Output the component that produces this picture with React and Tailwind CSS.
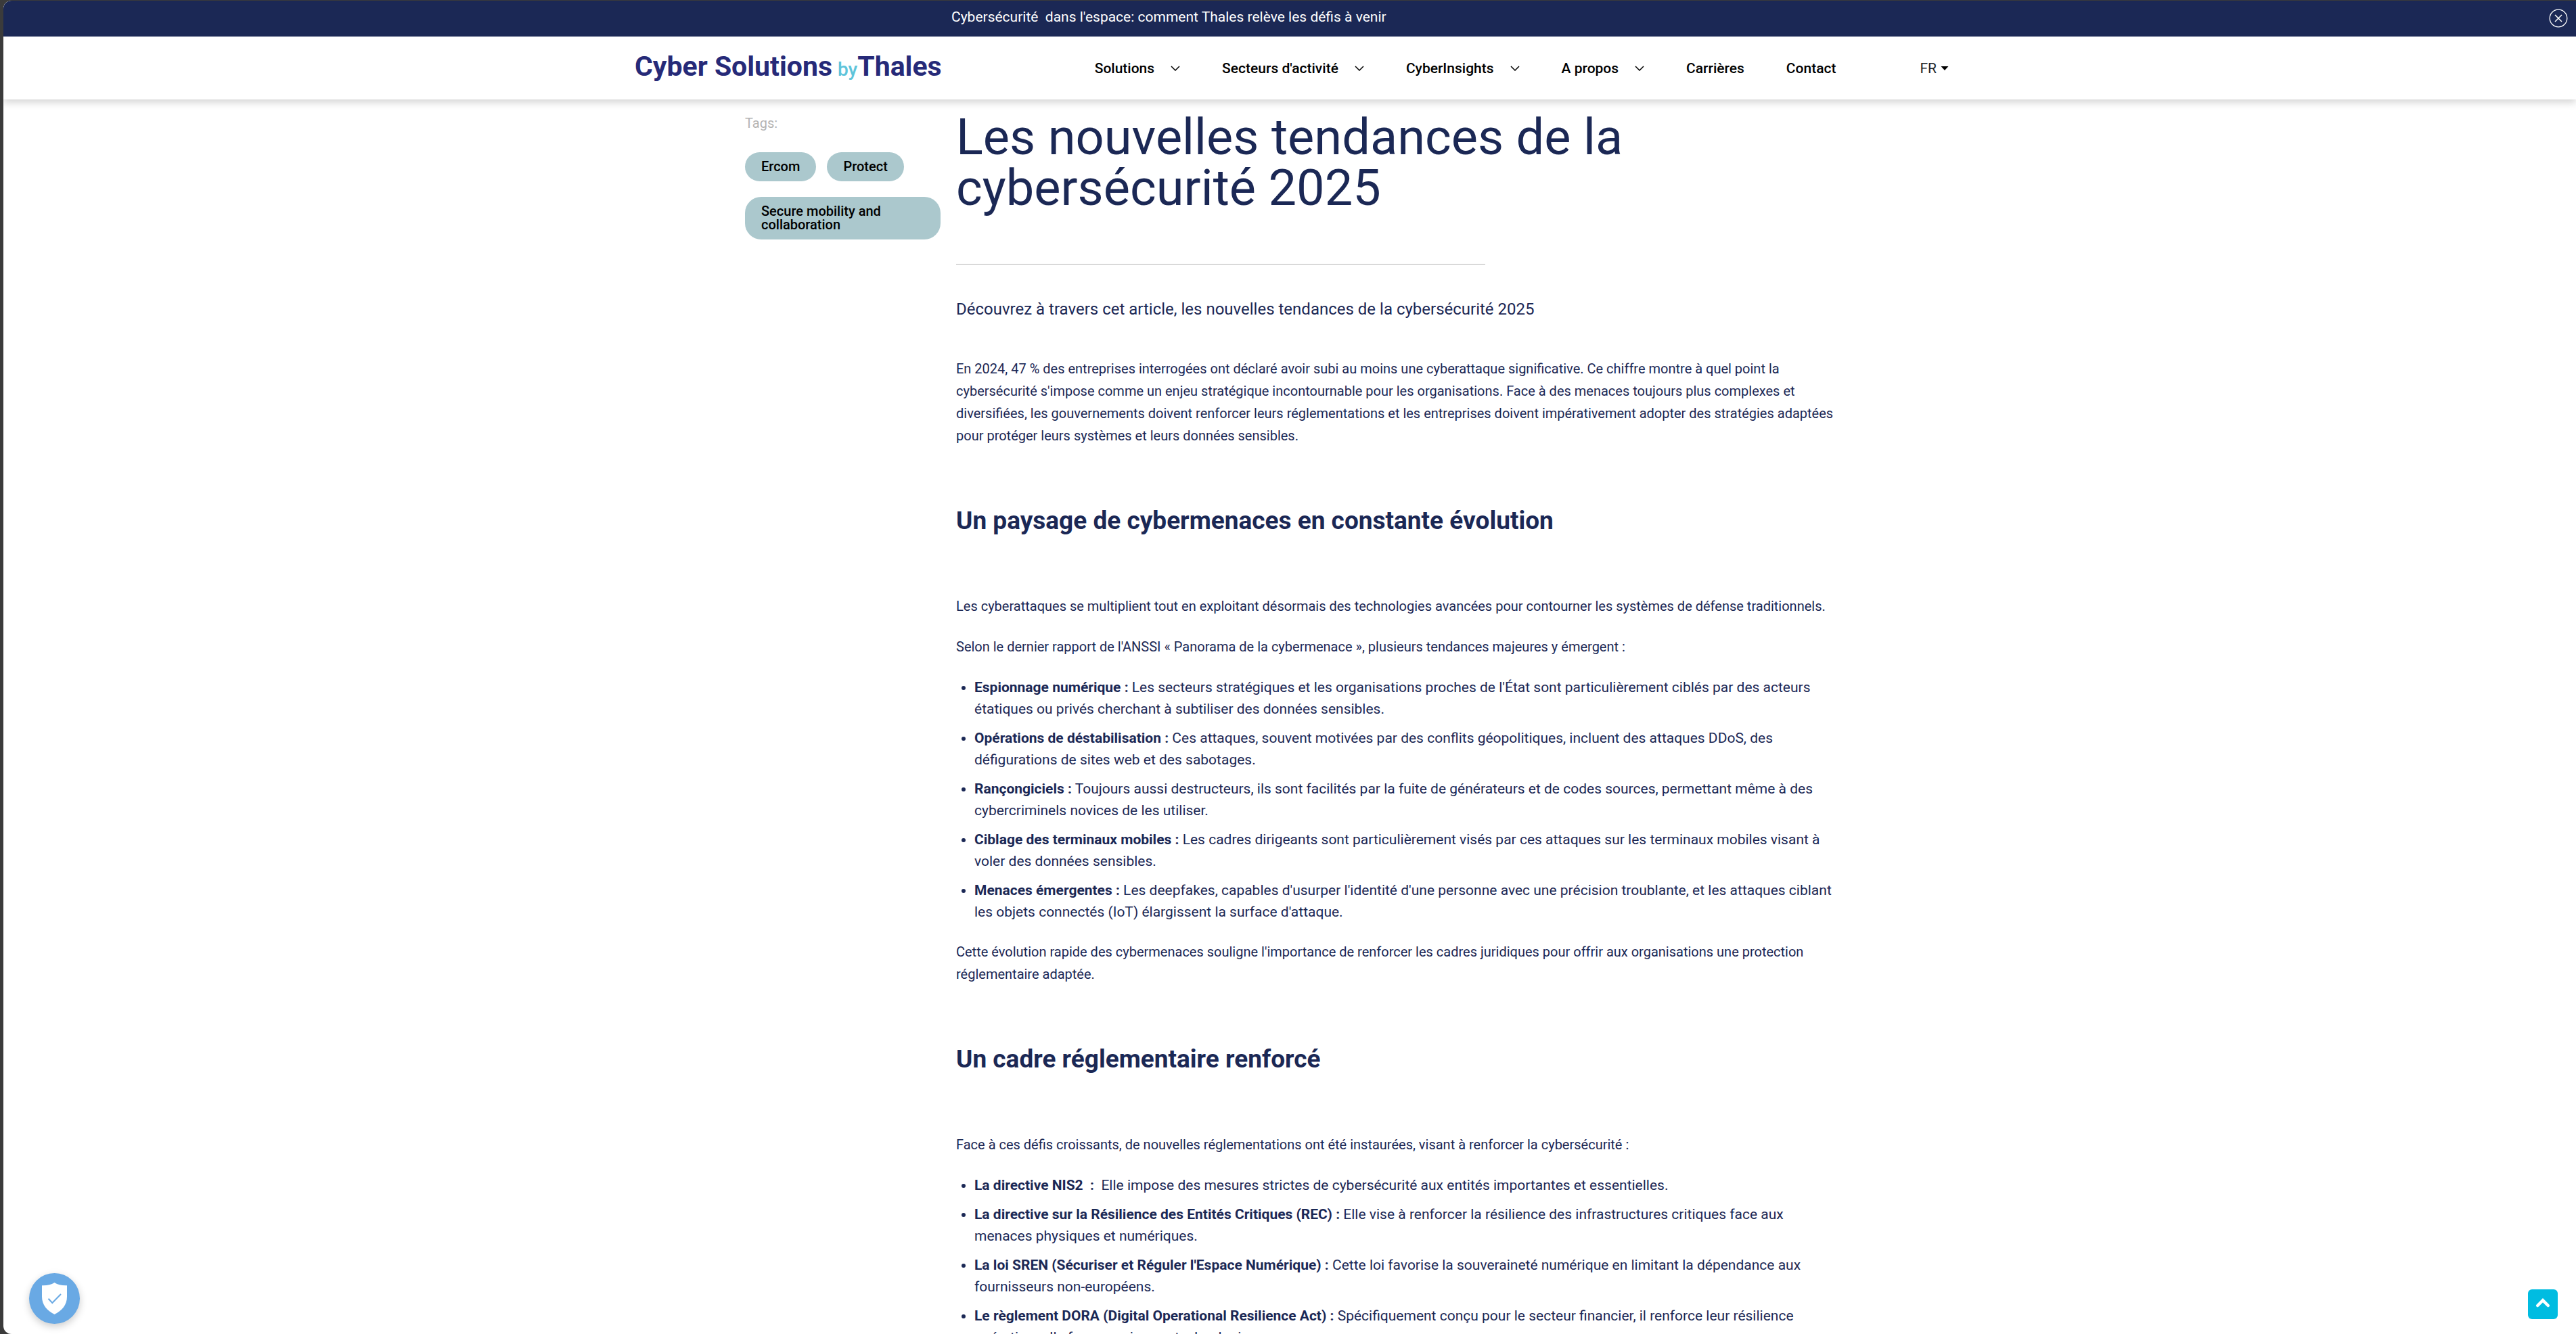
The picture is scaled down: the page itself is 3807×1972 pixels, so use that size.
const navItems = [
  { label: "Solutions", menu: true },
  { label: "Secteurs d'activité", menu: true },
  { label: "CyberInsights", menu: true },
  { label: "A propos", menu: true },
  { label: "Carrières", menu: false },
  { label: "Contact", menu: false },
];

const tags = ["Ercom", "Protect", "Secure mobility and collaboration"];

const threats = [
  {
    title: "Espionnage numérique :",
    text: "Les secteurs stratégiques et les organisations proches de l'État sont particulièrement ciblés par des acteurs étatiques ou privés cherchant à subtiliser des données sensibles.",
  },
  {
    title: "Opérations de déstabilisation :",
    text: "Ces attaques, souvent motivées par des conflits géopolitiques, incluent des attaques DDoS, des défigurations de sites web et des sabotages.",
  },
  {
    title: "Rançongiciels :",
    text: "Toujours aussi destructeurs, ils sont facilités par la fuite de générateurs et de codes sources, permettant même à des cybercriminels novices de les utiliser.",
  },
  {
    title: "Ciblage des terminaux mobiles :",
    text: "Les cadres dirigeants sont particulièrement visés par ces attaques sur les terminaux mobiles visant à voler des données sensibles.",
  },
  {
    title: "Menaces émergentes :",
    text: "Les deepfakes, capables d'usurper l'identité d'une personne avec une précision troublante, et les attaques ciblant les objets connectés (IoT) élargissent la surface d'attaque.",
  },
];

const regulations = [
  {
    title: "La directive NIS2\u00a0 :\u00a0",
    text: "Elle impose des mesures strictes de cybersécurité aux entités importantes et essentielles.",
  },
  {
    title: "La directive sur la Résilience des Entités Critiques (REC) :",
    text: "Elle vise à renforcer la résilience des infrastructures critiques face aux menaces physiques et numériques.",
  },
  {
    title: "La loi SREN (Sécuriser et Réguler l'Espace Numérique) :",
    text: "Cette loi favorise la souveraineté numérique en limitant la dépendance aux fournisseurs non-européens.",
  },
  {
    title: "Le règlement DORA (Digital Operational Resilience Act) :",
    text: "Spécifiquement conçu pour le secteur financier, il renforce leur résilience opérationnelle face aux risques technologiques.",
  },
];

function Banner() {
  return (
    <div className="relative h-[53px] bg-[#1b2855]">
      <div className="mx-auto flex h-full max-w-[1000px] items-center pb-1.5">
        <a href="#espace" className="text-[21px] leading-[32px] text-white">
          Cybersécurité&nbsp; dans l'espace: comment Thales relève les défis à venir
        </a>
      </div>
      <button type="button" aria-label="Fermer" className="absolute top-3 right-3">
        <svg className="size-7" viewBox="0 0 28 28" fill="none" stroke="white">
          <circle cx="14" cy="14" r="12.8" strokeWidth="1.3" />
          <path d="M9 9l10 10M19 9l-10 10" strokeWidth="1.5" />
        </svg>
      </button>
    </div>
  );
}

function Header() {
  return (
    <header className="relative z-10 bg-white shadow-[0_5px_10px_rgba(0,0,0,0.16)]">
      <Banner />
      <div className="mx-auto flex h-[93px] max-w-[1948px] items-center justify-between pl-1.5">
        <a href="#accueil" className="flex items-baseline whitespace-nowrap text-[41px] leading-[48px] font-bold text-[#262a78]">
          <span>Cyber Solutions</span>
          <span className="ml-2 text-[28px] font-medium text-[#5ec4da]">by</span>
          <span>Thales</span>
        </a>
        <div className="flex items-center gap-[124px]">
          <nav className="flex items-center gap-[62px] text-[21px] leading-[32px] font-medium text-black">
            {navItems.map((item) => (
              <a key={item.label} href="#menu" className="flex items-center gap-6">
                {item.label}
                {item.menu && (
                  <svg className="h-2 w-3.5" viewBox="0 0 14 8" fill="none" stroke="currentColor" strokeWidth="1.5">
                    <path d="M1 1l6 6 6-6" />
                  </svg>
                )}
              </a>
            ))}
          </nav>
          <button type="button" className="flex items-center gap-1.5 text-[21px] leading-[32px] text-[#212529]">
            FR
            <svg className="h-1.5 w-3" viewBox="0 0 12 6" fill="black">
              <path d="M0.5 0h11L6 6z" />
            </svg>
          </button>
        </div>
      </div>
    </header>
  );
}

function Tags() {
  return (
    <aside className="w-[289px] shrink-0 pt-[5px]">
      <p className="text-[20px] leading-[24px] text-[#b3b3b3]">Tags:</p>
      <ul className="mt-[31px] flex flex-wrap gap-x-4 gap-y-[23px]">
        {tags.map((tag) => (
          <li key={tag}>
            <a href="#tag" className="block rounded-3xl bg-[#abc8cd] px-6 pt-[11px] pb-3 text-[20px] leading-[20px] font-medium text-black">
              {tag}
            </a>
          </li>
        ))}
      </ul>
    </aside>
  );
}

function Paragraph({ children }) {
  return <p className="mb-[27px] text-[20px] leading-[33px]">{children}</p>;
}

function SectionTitle({ children }) {
  return <h2 className="mt-[87px] mb-[88px] text-[37px] leading-[44px] font-bold">{children}</h2>;
}

function BulletList({ items }) {
  return (
    <ul className="mb-[27px] list-disc pl-[27px] text-[21px] leading-[32px]">
      {items.map((item) => (
        <li key={item.title} className="mb-[11px]">
          <strong className="font-bold">{item.title}</strong> {item.text}
        </li>
      ))}
    </ul>
  );
}

function Article() {
  return (
    <article className="min-w-0 flex-1 text-[#1b2855]">
      <h1 className="text-[74px] leading-[75px]">Les nouvelles tendances de la cybersécurité 2025</h1>
      <hr className="mt-[75px] w-3/5 border-[#b3b3b3]" />
      <p className="mt-12 mb-[54px] text-[24px] leading-[36px]">
        Découvrez à travers cet article, les nouvelles tendances de la cybersécurité 2025
      </p>
      <Paragraph>
        En 2024, 47 % des entreprises interrogées ont déclaré avoir subi au moins une cyberattaque significative. Ce
        chiffre montre à quel point la cybersécurité s'impose comme un enjeu stratégique incontournable pour les
        organisations. Face à des menaces toujours plus complexes et diversifiées, les gouvernements doivent renforcer
        leurs réglementations et les entreprises doivent impérativement adopter des stratégies adaptées pour protéger
        leurs systèmes et leurs données sensibles.
      </Paragraph>
      <SectionTitle>Un paysage de cybermenaces en constante évolution</SectionTitle>
      <Paragraph>
        Les cyberattaques se multiplient tout en exploitant désormais des technologies avancées pour contourner les
        systèmes de défense traditionnels.
      </Paragraph>
      <Paragraph>
        Selon le dernier rapport de l'ANSSI « Panorama de la cybermenace », plusieurs tendances majeures y émergent :
      </Paragraph>
      <BulletList items={threats} />
      <Paragraph>
        Cette évolution rapide des cybermenaces souligne l'importance de renforcer les cadres juridiques pour offrir aux
        organisations une protection réglementaire adaptée.
      </Paragraph>
      <SectionTitle>Un cadre réglementaire renforcé</SectionTitle>
      <Paragraph>
        Face à ces défis croissants, de nouvelles réglementations ont été instaurées, visant à renforcer la
        cybersécurité :
      </Paragraph>
      <BulletList items={regulations} />
    </article>
  );
}

export default function App() {
  return (
    <div className="h-screen overflow-hidden bg-[#3b3b3b] pt-px pl-[5px] font-['Roboto',sans-serif]">
      <div className="relative h-full overflow-hidden rounded-l-xl bg-white">
        <Header />
        <main className="mx-auto flex max-w-[1634px] gap-[23px] pt-[18px] pr-1.5 pl-3">
          <Tags />
          <Article />
        </main>
        <button
          type="button"
          aria-label="Préférences de confidentialité"
          className="absolute bottom-[15px] left-[38px] size-[75px] rounded-full bg-[#69a9e4] shadow-[0_4px_12px_rgba(0,0,0,0.2)]"
        >
          <svg className="size-full" viewBox="0 0 75 75" fill="none">
            <path
              d="M37.5 14c-5 3.400-11 4.400-18.500 4.200v16.800c0 12 7.500 20.500 18.500 26 11-5.500 18.500-14 18.500-26V18.200c-7.500 .2-13.500-.8-18.500-4.200z"
              fill="white"
            />
            <path d="M28.500 37.800l5.800 6.200 12.700-13" stroke="#69a9e4" strokeWidth="2" />
          </svg>
        </button>
        <button
          type="button"
          aria-label="Retour en haut"
          className="absolute right-[27px] bottom-[22px] size-11 rounded-md bg-[#00bce1]"
        >
          <svg className="size-full" viewBox="0 0 44 44" fill="none" stroke="white" strokeWidth="4.5" strokeLinecap="round">
            <path d="M14.200 24l7.800-7.800 7.800 7.800" />
          </svg>
        </button>
      </div>
    </div>
  );
}
